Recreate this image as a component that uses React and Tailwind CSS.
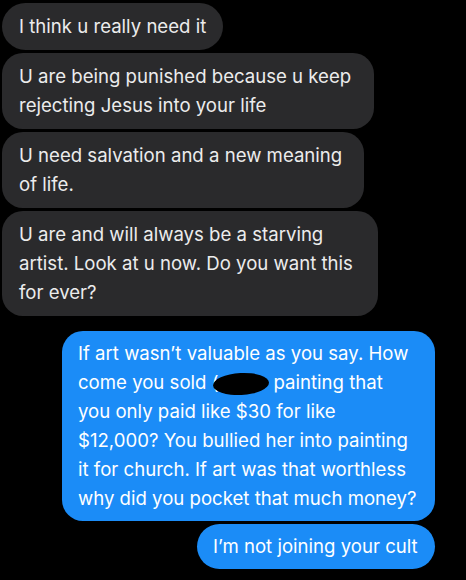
import React from 'react'

const font = { fontFamily: 'Inter, "Liberation Sans", sans-serif' }

function Grey({ width, children }) {
  return (
    <div className={`${width} ml-[2px] rounded-[21px] bg-[#2a2a2c] pl-[17px] py-[9px] text-[18.6px] leading-[29px] text-[#ececec] whitespace-nowrap`}>
      {children}
    </div>
  )
}

function Blue({ width, children }) {
  return (
    <div className={`${width} self-end mr-[31px] rounded-[21px] bg-[#1b8cf7] pl-[16px] py-[8px] text-[18.6px] leading-[29px] text-white whitespace-nowrap`}>
      {children}
    </div>
  )
}

export default function App() {
  return (
    <div className="w-[466px] h-[580px] bg-black flex flex-col gap-[3px] pt-[3px] overflow-hidden" style={font}>
      <Grey width="w-[221px] rounded-[24px]">I think u really need it</Grey>
      <Grey width="w-[372px]">
        U are being punished because u keep<br />rejecting Jesus into your life
      </Grey>
      <Grey width="w-[362px]">
        U need salvation and a new meaning<br />of life.
      </Grey>
      <Grey width="w-[376px]">
        U are and will always be a starving<br />artist. Look at u now. Do you want this<br />for ever?
      </Grey>

      {/* sent */}
      <div className="mt-[12px] flex flex-col gap-[3px]">
        <Blue width="w-[373px]">
          If art wasn’t valuable as you say. How<br />
          come you sold (
          <span className="inline-block align-middle -ml-[5px] mr-[4px] w-[56px] h-[22px] bg-black rounded-[50%] -rotate-3"></span>
          painting that<br />
          you only paid like $30 for like<br />
          $12,000? You bullied her into painting<br />
          it for church. If art was that worthless<br />
          why did you pocket that much money?
        </Blue>
        <Blue width="w-[238px] rounded-[24px]">I’m not joining your cult</Blue>
      </div>
    </div>
  )
}
